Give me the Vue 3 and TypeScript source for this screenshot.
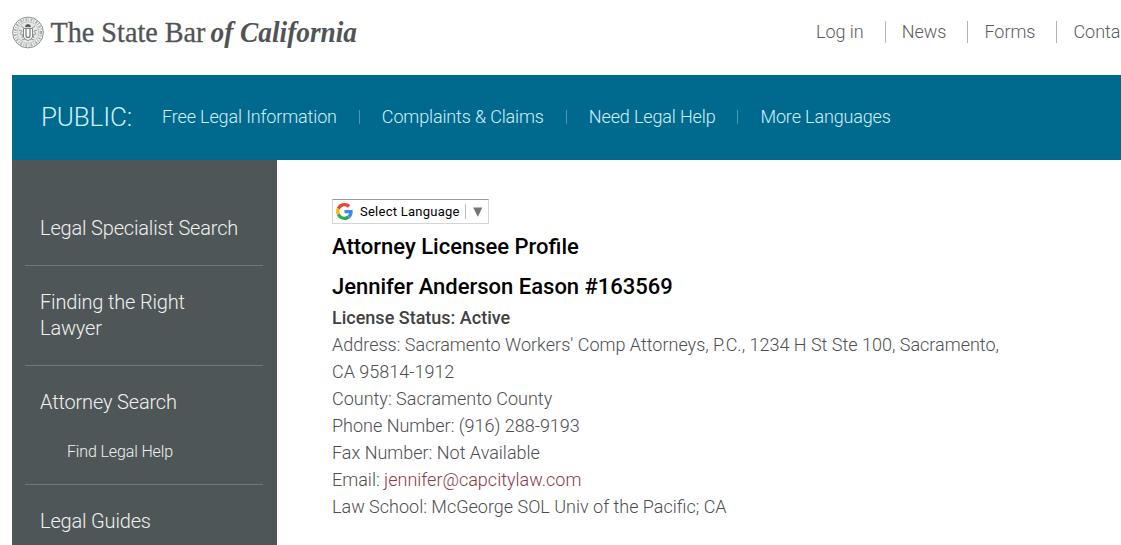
<script setup lang="ts">
interface SideItem { label: string; child?: string }

const utility: string[] = ['Log in', 'News', 'Forms', 'Conta']
const publicLinks: string[] = ['Free Legal Information', 'Complaints & Claims', 'Need Legal Help', 'More Languages']
const side: SideItem[] = [
  { label: 'Legal Specialist Search' },
  { label: 'Finding the Right Lawyer' },
  { label: 'Attorney Search', child: 'Find Legal Help' },
  { label: 'Legal Guides' },
]
</script>

<template>
  <div class="page">
    <header class="top">
      <svg class="logo" width="350" height="44" viewBox="0 0 350 44" role="img" aria-label="The State Bar of California">
        <g fill="none" stroke="#74787a">
          <circle cx="16" cy="22.500" r="15.400" fill="#f1f1f1" stroke="#808485" stroke-width=".9" />
          <circle cx="16" cy="22.500" r="13" stroke="#a9acad" stroke-width="2.600" stroke-dasharray="1.700 1.200 .8 1.600" />
          <circle cx="16" cy="22.500" r="10.900" fill="#e6e7e7" stroke="#a0a3a4" stroke-width=".6" />
          <path d="M7 20l3 1-2 3 3 1-1 3M25 20l-3 1 2 3-3 1 1 3M9 16l3 2M23 16l-3 2M10 30l3-1M22 30l-3-1" stroke="#999c9d" stroke-width="1" />
          <path d="M11.500 18.500h9v8.500q-1 2.500-4.500 3.500-3.500-1-4.500-3.500z" fill="#fafafa" stroke="#777b7c" stroke-width=".9" />
          <path d="M14 19v6.500q0 2 2 2t2-2V19" stroke="#6a6e70" stroke-width="1.100" />
          <path d="M13.500 16.700q0-2.200 2.500-2.200t2.500 2.200z" fill="#505557" stroke="#505557" stroke-width=".8" />
        </g>
        <g class="wordmark">
          <text x="38.500" y="31.500" textLength="155" lengthAdjust="spacingAndGlyphs">The State Bar</text>
          <text class="italic" x="198.500" y="31.500" textLength="146.500" lengthAdjust="spacingAndGlyphs">of California</text>
        </g>
      </svg>
      <nav class="utility">
        <a v-for="u in utility" :key="u">{{ u }}</a>
      </nav>
    </header>

    <nav class="public">
      <strong>PUBLIC:</strong>
      <ul>
        <li v-for="p in publicLinks" :key="p">{{ p }}</li>
      </ul>
    </nav>

    <div class="columns">
      <aside class="side">
        <div v-for="s in side" :key="s.label" class="side-item">
          <a>{{ s.label }}</a>
          <a v-if="s.child" class="child">{{ s.child }}</a>
        </div>
      </aside>

      <main class="main">
        <div class="translate">
          <svg width="17" height="17" viewBox="0 0 48 48">
            <path fill="#ea4335" d="M24 9.500c3.500 0 6.700 1.200 9.200 3.600l6.900-6.900C35.900 2.400 30.500 0 24 0 14.600 0 6.500 5.400 2.600 13.200l8 6.200C12.400 13.700 17.700 9.500 24 9.500z" />
            <path fill="#4285f4" d="M47 24.600c0-1.600-.2-3.100-.4-4.600H24v9h12.900c-.6 3-2.300 5.500-4.700 7.200l7.700 6C44.400 38 47 32 47 24.600z" />
            <path fill="#fbbc05" d="M10.500 28.600c-.5-1.500-.8-3-.8-4.600s.3-3.100.8-4.600l-8-6.200C.9 16.500 0 20.100 0 24s.9 7.500 2.600 10.800l7.900-6.200z" />
            <path fill="#34a853" d="M24 48c6.500 0 11.900-2.100 15.900-5.800l-7.700-6c-2.200 1.400-4.900 2.300-8.200 2.300-6.300 0-11.600-4.200-13.500-9.900l-8 6.200C6.500 42.600 14.600 48 24 48z" />
          </svg>
          <span class="translate-label">Select Language</span>
          <span class="translate-arrow"><svg width="10" height="10" viewBox="0 0 10 10"><path d="M.2 .5h9.200L4.800 9.800z" fill="#757575" /></svg></span>
        </div>
        <h1>Attorney Licensee Profile</h1>
        <h2>Jennifer Anderson Eason #163569</h2>
        <p class="status">License Status: Active</p>
        <p>Address: Sacramento Workers' Comp Attorneys, P.C., 1234 H St Ste 100, Sacramento, CA 95814-1912</p>
        <p>County: Sacramento County</p>
        <p>Phone Number: (916) 288-9193</p>
        <p>Fax Number: Not Available</p>
        <p>Email: <a class="mail">jennifer@capcitylaw.com</a></p>
        <p>Law School: McGeorge SOL Univ of the Pacific; CA</p>
      </main>
    </div>
  </div>
</template>

<style>
body { margin: 0; background: #fff; }
</style>

<style scoped>
.page {
  width: 1121px;
  height: 545px;
  overflow: hidden;
  box-sizing: border-box;
  padding-left: 12px;
  font: 300 18px/27px Roboto, sans-serif;
  color: #4c4e51;
  display: flex;
  flex-direction: column;
}
.top { height: 75px; flex: none; display: flex; overflow: hidden; }
.logo { flex: none; margin-top: 10px; }
.wordmark { font: 28.500px "Liberation Serif", serif; fill: #505456; stroke: #505456; stroke-width: .3px; }
.italic { font-weight: 700; font-style: italic; stroke: none; }
.utility { display: flex; flex: none; margin: 21px 0 0 454px; height: 22px; line-height: 22px; color: #595c5f; white-space: nowrap; letter-spacing: -.03px; }
.utility a + a { border-left: 1px solid #b2b4b5; margin-left: 21px; padding-left: 16px; }
.public { height: 85px; flex: none; display: flex; align-items: center; background: #006a8e; color: #d2effa; }
.public strong { font-weight: 300; font-size: 26px; width: 91px; margin: 0 30px 0 29px; white-space: nowrap; letter-spacing: -.15px; }
.public ul { display: flex; list-style: none; margin: 0 0 2px; padding: 0; white-space: nowrap; letter-spacing: -.14px; }
.public li { display: flex; align-items: center; }
.public li + li::before { content: ""; width: 1px; height: 14px; margin: 1px 22px 0; background: #4b9ab3; }
.columns { flex: 1; display: flex; min-height: 0; }
.side { width: 265px; box-sizing: border-box; flex: none; padding: 32px 14px 0 13px; background: #4f5657; color: #f0f1f1; font-size: 20px; line-height: 26px; letter-spacing: -.17px; overflow: hidden; }
.side-item { padding: 23px 50px 24px 15px; border-bottom: 1px solid #73797a; }
.side-item:first-child { padding-right: 0; }
.side-item a { display: block; }
.side-item .child { font-size: 16px; line-height: 22px; letter-spacing: -.13px; margin: 26px 0 -3px 27px; }
.main { flex: none; width: 690px; padding: 39px 0 0 55px; }
.translate { display: flex; align-items: center; box-sizing: border-box; width: 157px; height: 25px; padding-left: 3px; border: 1px solid #d5d5d5; border-top-color: #9b9b9b; }
.translate-label { margin-left: 7px; width: 100px; font: 400 13px/20px Roboto, sans-serif; letter-spacing: .25px; color: #000; white-space: nowrap; }
.translate-arrow { display: flex; align-items: center; height: 15px; margin-left: 5px; padding-left: 7px; border-left: 1px solid #bbb; }
h1, h2 { margin: 0; font-size: 22px; font-weight: 500; line-height: 30px; color: #000; }
h1 { margin-top: 8px; }
h2 { margin: 10px 0 2px; }
p { margin: 0; }
.status { font-weight: 500; color: #414141; }
.mail { color: #8b3a42; }
</style>
